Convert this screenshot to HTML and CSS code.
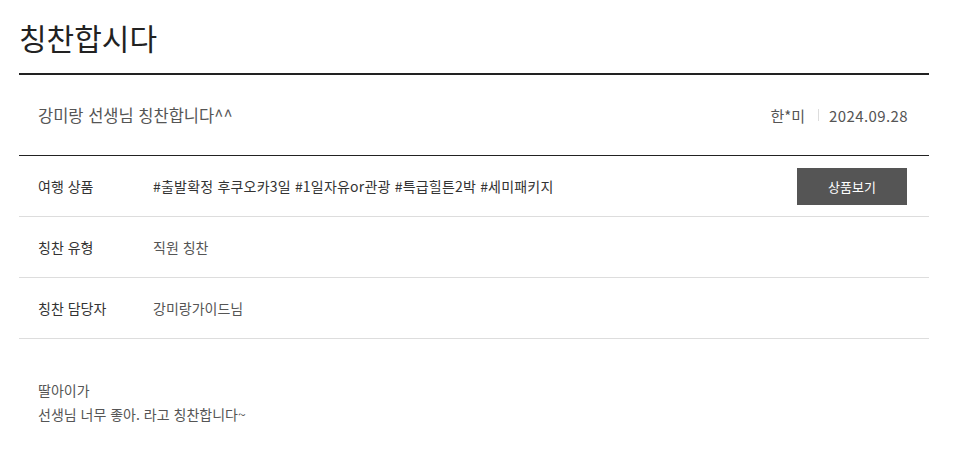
FILE: index.html
```html
<!DOCTYPE html>
<html lang="ko">
<head>
    <meta charset="UTF-8">
    <meta name="viewport" content="width=device-width, initial-scale=1.0">
    <title>칭찬합시다</title>
    <link rel="stylesheet" href="styles.css">
</head>
<body>
    <div class="wrap">
        <h1 class="page-title">칭찬합시다</h1>
        <div class="post-head">
            <div class="post-title">강미랑 선생님 칭찬합니다^^</div>
            <div class="post-meta">
                <span class="writer">한*미</span>
                <span class="bar"></span>
                <span class="date">2024.09.28</span>
            </div>
        </div>
        <div class="info-row">
            <div class="label">여행 상품</div>
            <div class="value product">#출발확정 후쿠오카3일 #1일자유or관광 #특급힐튼2박 #세미패키지</div>
            <a class="btn" href="#">상품보기</a>
        </div>
        <div class="info-row">
            <div class="label">칭찬 유형</div>
            <div class="value">직원 칭찬</div>
        </div>
        <div class="info-row">
            <div class="label">칭찬 담당자</div>
            <div class="value">강미랑가이드님</div>
        </div>
        <div class="post-body">
            <p>딸아이가</p>
            <p>선생님 너무 좋아. 라고 칭찬합니다~</p>
        </div>
    </div>
</body>
</html>
```

FILE: styles.css
```css
body {
    margin: 0;
    font-family: "Noto Sans CJK KR", "Noto Sans", sans-serif;
    background-color: #fff;
    color: #333;
}
.wrap {
    width: 910px;
    margin-left: 19px;
}
.page-title {
    margin: 0;
    padding-top: 17px;
    height: 56px;
    font-size: 30px;
    font-weight: 400;
    line-height: 40px;
    color: #222;
    border-bottom: 2px solid #222;
    box-sizing: content-box;
}
.post-head {
    display: flex;
    align-items: center;
    justify-content: space-between;
    height: 80px;
    padding: 0 21px 0 19px;
    border-bottom: 1px solid #222;
}
.post-title {
    font-size: 16.5px;
    color: #555;
}
.post-meta {
    display: flex;
    align-items: center;
    font-size: 15px;
    color: #555;
}
.date {
    letter-spacing: 0.4px;
}
.bar {
    width: 1px;
    height: 12px;
    background-color: #ddd;
    margin: 0 10px 0 13px;
}
.info-row {
    display: flex;
    align-items: center;
    height: 60px;
    padding: 0 22px 0 19px;
    border-bottom: 1px solid #ddd;
    font-size: 14px;
}
.label {
    width: 115px;
    color: #333;
}
.value {
    flex: 1;
    color: #555;
}
.value.product {
    color: #333;
    letter-spacing: 0.2px;
}
.btn {
    display: flex;
    align-items: center;
    justify-content: center;
    width: 110px;
    height: 37px;
    background-color: #555;
    color: #fff;
    font-size: 13px;
    text-decoration: none;
}
.post-body {
    padding: 39px 19px;
    font-size: 14px;
    color: #555;
}
.post-body p {
    margin: 0;
    line-height: 24px;
}
```
